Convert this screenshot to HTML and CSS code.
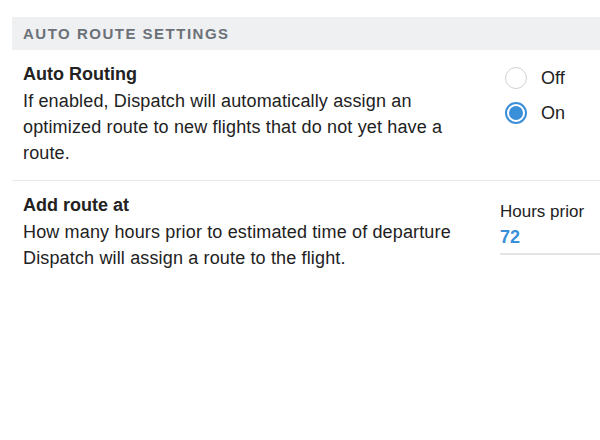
FILE: index.html
```html
<!DOCTYPE html>
<html>
<head>
<meta charset="utf-8">
<link rel="stylesheet" href="styles.css">
</head>
<body>
<div class="page">
  <div class="section-header">AUTO ROUTE SETTINGS</div>
  <div class="row">
    <div class="info">
      <div class="title">Auto Routing</div>
      <div class="desc">If enabled, Dispatch will automatically assign an optimized route to new flights that do not yet have a route.</div>
    </div>
    <div class="control radios">
      <label class="radio"><span class="circle"></span><span class="rlabel">Off</span></label>
      <label class="radio checked"><span class="circle"></span><span class="rlabel">On</span></label>
    </div>
  </div>
  <div class="row last">
    <div class="info">
      <div class="title">Add route at</div>
      <div class="desc">How many hours prior to estimated time of departure Dispatch will assign a route to the flight.</div>
    </div>
    <div class="control field">
      <div class="field-label">Hours prior</div>
      <div class="field-value">72</div>
    </div>
  </div>
</div>
</body>
</html>
```

FILE: styles.css
```css
html, body {
  margin: 0;
  padding: 0;
  background: #ffffff;
}
body {
  font-family: "Liberation Sans", Arial, sans-serif;
  color: #222222;
}
.page {
  padding: 17px 0 0 12px;
}
.section-header {
  height: 33px;
  line-height: 34px;
  background: #eff0f2;
  padding-left: 11px;
  font-size: 15px;
  font-weight: bold;
  letter-spacing: 1.5px;
  color: #6b7178;
}
.row {
  display: flex;
  justify-content: space-between;
  border-bottom: 1px solid #e6e7e9;
  padding: 10px 0 14px 11px;
}
.row.last {
  border-bottom: none;
}
.info {
  width: 440px;
}
.title {
  font-size: 18px;
  font-weight: bold;
  line-height: 28px;
}
.desc {
  font-size: 18px;
  line-height: 26px;
  letter-spacing: 0.15px;
}
.radios {
  display: flex;
  flex-direction: column;
  gap: 13px;
  padding-top: 7px;
  width: 95px;
}
.radio {
  display: flex;
  align-items: center;
  gap: 14px;
  font-size: 18px;
  height: 22px;
}
.circle {
  width: 22px;
  height: 22px;
  box-sizing: border-box;
  border-radius: 50%;
  border: 1px solid #cfd1d4;
  background: #fff;
  position: relative;
}
.radio.checked .circle {
  border: 2px solid #3a8fd9;
}
.radio.checked .circle::after {
  content: "";
  position: absolute;
  left: 2px;
  top: 2px;
  width: 14px;
  height: 14px;
  border-radius: 50%;
  background: #3a8fd9;
}
.field {
  width: 100px;
  margin-top: 9px;
  padding-bottom: 3px;
  border-bottom: 2px solid #e3e4e6;
  align-self: flex-start;
}
.field-label {
  font-size: 17px;
  line-height: 24px;
}
.field-value {
  font-size: 18px;
  font-weight: bold;
  color: #3a8fd9;
  line-height: 26px;
}
```
